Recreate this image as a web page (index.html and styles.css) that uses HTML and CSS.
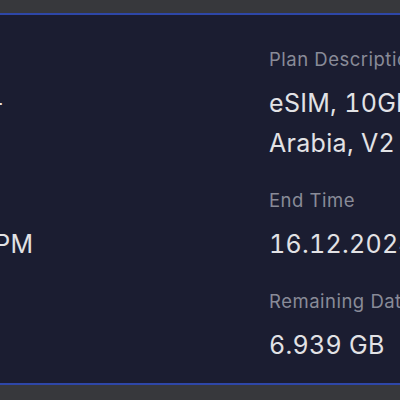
FILE: index.html
```html
<!DOCTYPE html>
<html lang="en">
<head>
    <meta charset="UTF-8">
    <meta name="viewport" content="width=device-width, initial-scale=1.0">
    <title>eSIM Details</title>
    <link rel="stylesheet" href="styles.css">
</head>
<body>
    <section class="card">
        <div class="details">
            <div class="item">
                <span class="label">Plan Name</span>
                <span class="value">Saudi Arabia 10GB–</span>
            </div>
            <div class="item">
                <span class="label">Plan Description</span>
                <span class="value">eSIM, 10GB, 30 Days, Saudi Arabia, V2</span>
            </div>
            <div class="item">
                <span class="label">Start Time</span>
                <span class="value">16.11.2024 02:47 PM</span>
            </div>
            <div class="item">
                <span class="label">End Time</span>
                <span class="value">16.12.2024 02:47 PM</span>
            </div>
            <div class="item">
                <span class="label">Total</span>
                <span class="value">10 GB</span>
            </div>
            <div class="item">
                <span class="label">Remaining Data</span>
                <span class="value">6.939 GB</span>
            </div>
        </div>
    </section>
</body>
</html>
```
FILE: styles.css
```css
/* ===== BASE ===== */
* {
    margin: 0;
    padding: 0;
    box-sizing: border-box;
}

body {
    font-family: Inter, 'Liberation Sans', sans-serif;
    background-color: #37383c;
    overflow: hidden;
}

/* ===== CARD ===== */
.card {
    width: 1000px;
    margin: 13px 0 0 -267px;
    padding: 31px 28px 18px;
    background: #1b1d31;
    border-top: 2px solid #2e47a8;
    border-bottom: 2px solid #2e47a8;
}

.details {
    display: grid;
    grid-template-columns: 360px 360px;
    column-gap: 148px;
    row-gap: 24px;
}

.item {
    display: flex;
    flex-direction: column;
    gap: 11px;
}

.label {
    font-size: 18.5px;
    line-height: 26px;
    letter-spacing: 0.5px;
    color: #898b98;
}

.value {
    font-size: 25px;
    line-height: 40px;
    letter-spacing: 0.3px;
    font-variant-numeric: tabular-nums;
    color: #e2e2e5;
}
```
